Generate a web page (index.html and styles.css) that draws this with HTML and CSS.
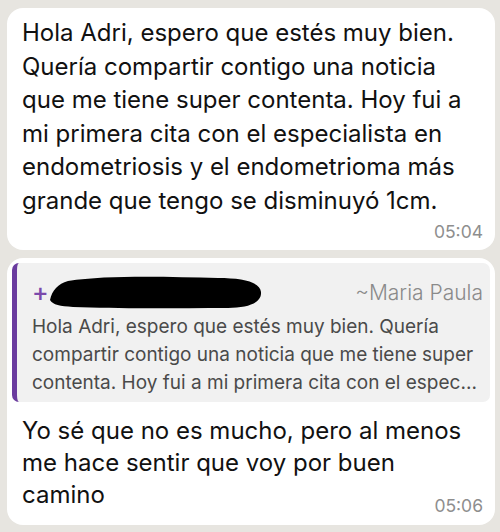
FILE: index.html
```html
<!DOCTYPE html>
<html lang="es">
<head>
  <meta charset="UTF-8" />
  <meta name="viewport" content="width=device-width, initial-scale=1.0"/>
  <title>Chat</title>
  <link rel="stylesheet" href="styles.css">
</head>
<body>

  <div class="chat">

    <!-- Mensaje original -->
    <div class="bubble first">
      <p class="text">Hola Adri, espero que estés muy bien.<br>
        Quería compartir contigo una noticia<br>
        que me tiene super contenta. Hoy fui a<br>
        mi primera cita con el especialista en<br>
        endometriosis y el endometrioma más<br>
        grande que tengo se disminuyó 1cm.</p>
      <div class="time">05:04</div>
    </div>

    <!-- Respuesta con cita -->
    <div class="bubble second">
      <div class="quote">
        <div class="quote-head">
          <span class="plus">+</span>
          <svg class="redacted" width="214" height="38" viewBox="0 0 214 38">
            <path d="M2 27 C 4 17, 10 11, 20 8 C 60 2, 120 4, 170 5 C 195 5, 212 9, 213 19 C 214 30, 200 35, 180 35 C 130 35, 70 36, 25 34 C 12 33, 5 32, 2 27 Z" fill="#000"/>
          </svg>
          <span class="author">~Maria Paula</span>
        </div>
        <div class="quote-text">
          <span>Hola Adri, espero que estés muy bien. Quería</span>
          <span>compartir contigo una noticia que me tiene super</span>
          <span>contenta. Hoy fui a mi primera cita con el espec...</span>
        </div>
      </div>
      <p class="text">Yo sé que no es mucho, pero al menos<br>
        me hace sentir que voy por buen<br>
        camino<span class="time">05:06</span></p>
    </div>

  </div>

</body>
</html>
```

FILE: styles.css
```css
body {
  margin: 0;
  padding: 0;
  background: #e7e5e0;
  font-family: Inter, 'Noto Sans', sans-serif;
  color: #111;
}
.chat {
  display: flex;
  flex-direction: column;
  gap: 8px;
  padding: 8px 5px 0 7px;
}
.bubble {
  background: #fff;
  border-radius: 16px;
}
.text {
  margin: 0;
  font-size: 24px;
  line-height: 33.5px;
  white-space: nowrap;
}
.time {
  text-align: right;
  font-size: 17.5px;
  line-height: 20px;
  color: #8e8e8e;
}
.first {
  padding: 8px 12px 8px 15px;
}
.first .time {
  margin-top: 5px;
}
.second {
  padding: 5px 5px 9px 5px;
}
.second .text {
  display: flow-root;
  margin: 13px 7px 0 10px;
  line-height: 32px;
}
.second .time {
  float: right;
  margin-top: 17px;
}
.quote {
  background: #f1f1f1;
  border-left: 5px solid #6a3b9e;
  border-radius: 7px;
  padding: 10px 7px 5px 15px;
}
.quote-head {
  display: flex;
  align-items: center;
  height: 38px;
}
.plus {
  color: #7b4aab;
  font-size: 25px;
  font-weight: 500;
  margin-right: -1px;
}
.author {
  margin-left: auto;
  color: #8a8a8a;
  font-size: 21px;
  font-weight: 300;
}
.quote-text {
  display: flex;
  flex-direction: column;
  margin-top: 2px;
  color: #4a4a4a;
  font-size: 19px;
  line-height: 28px;
  white-space: nowrap;
}
```
